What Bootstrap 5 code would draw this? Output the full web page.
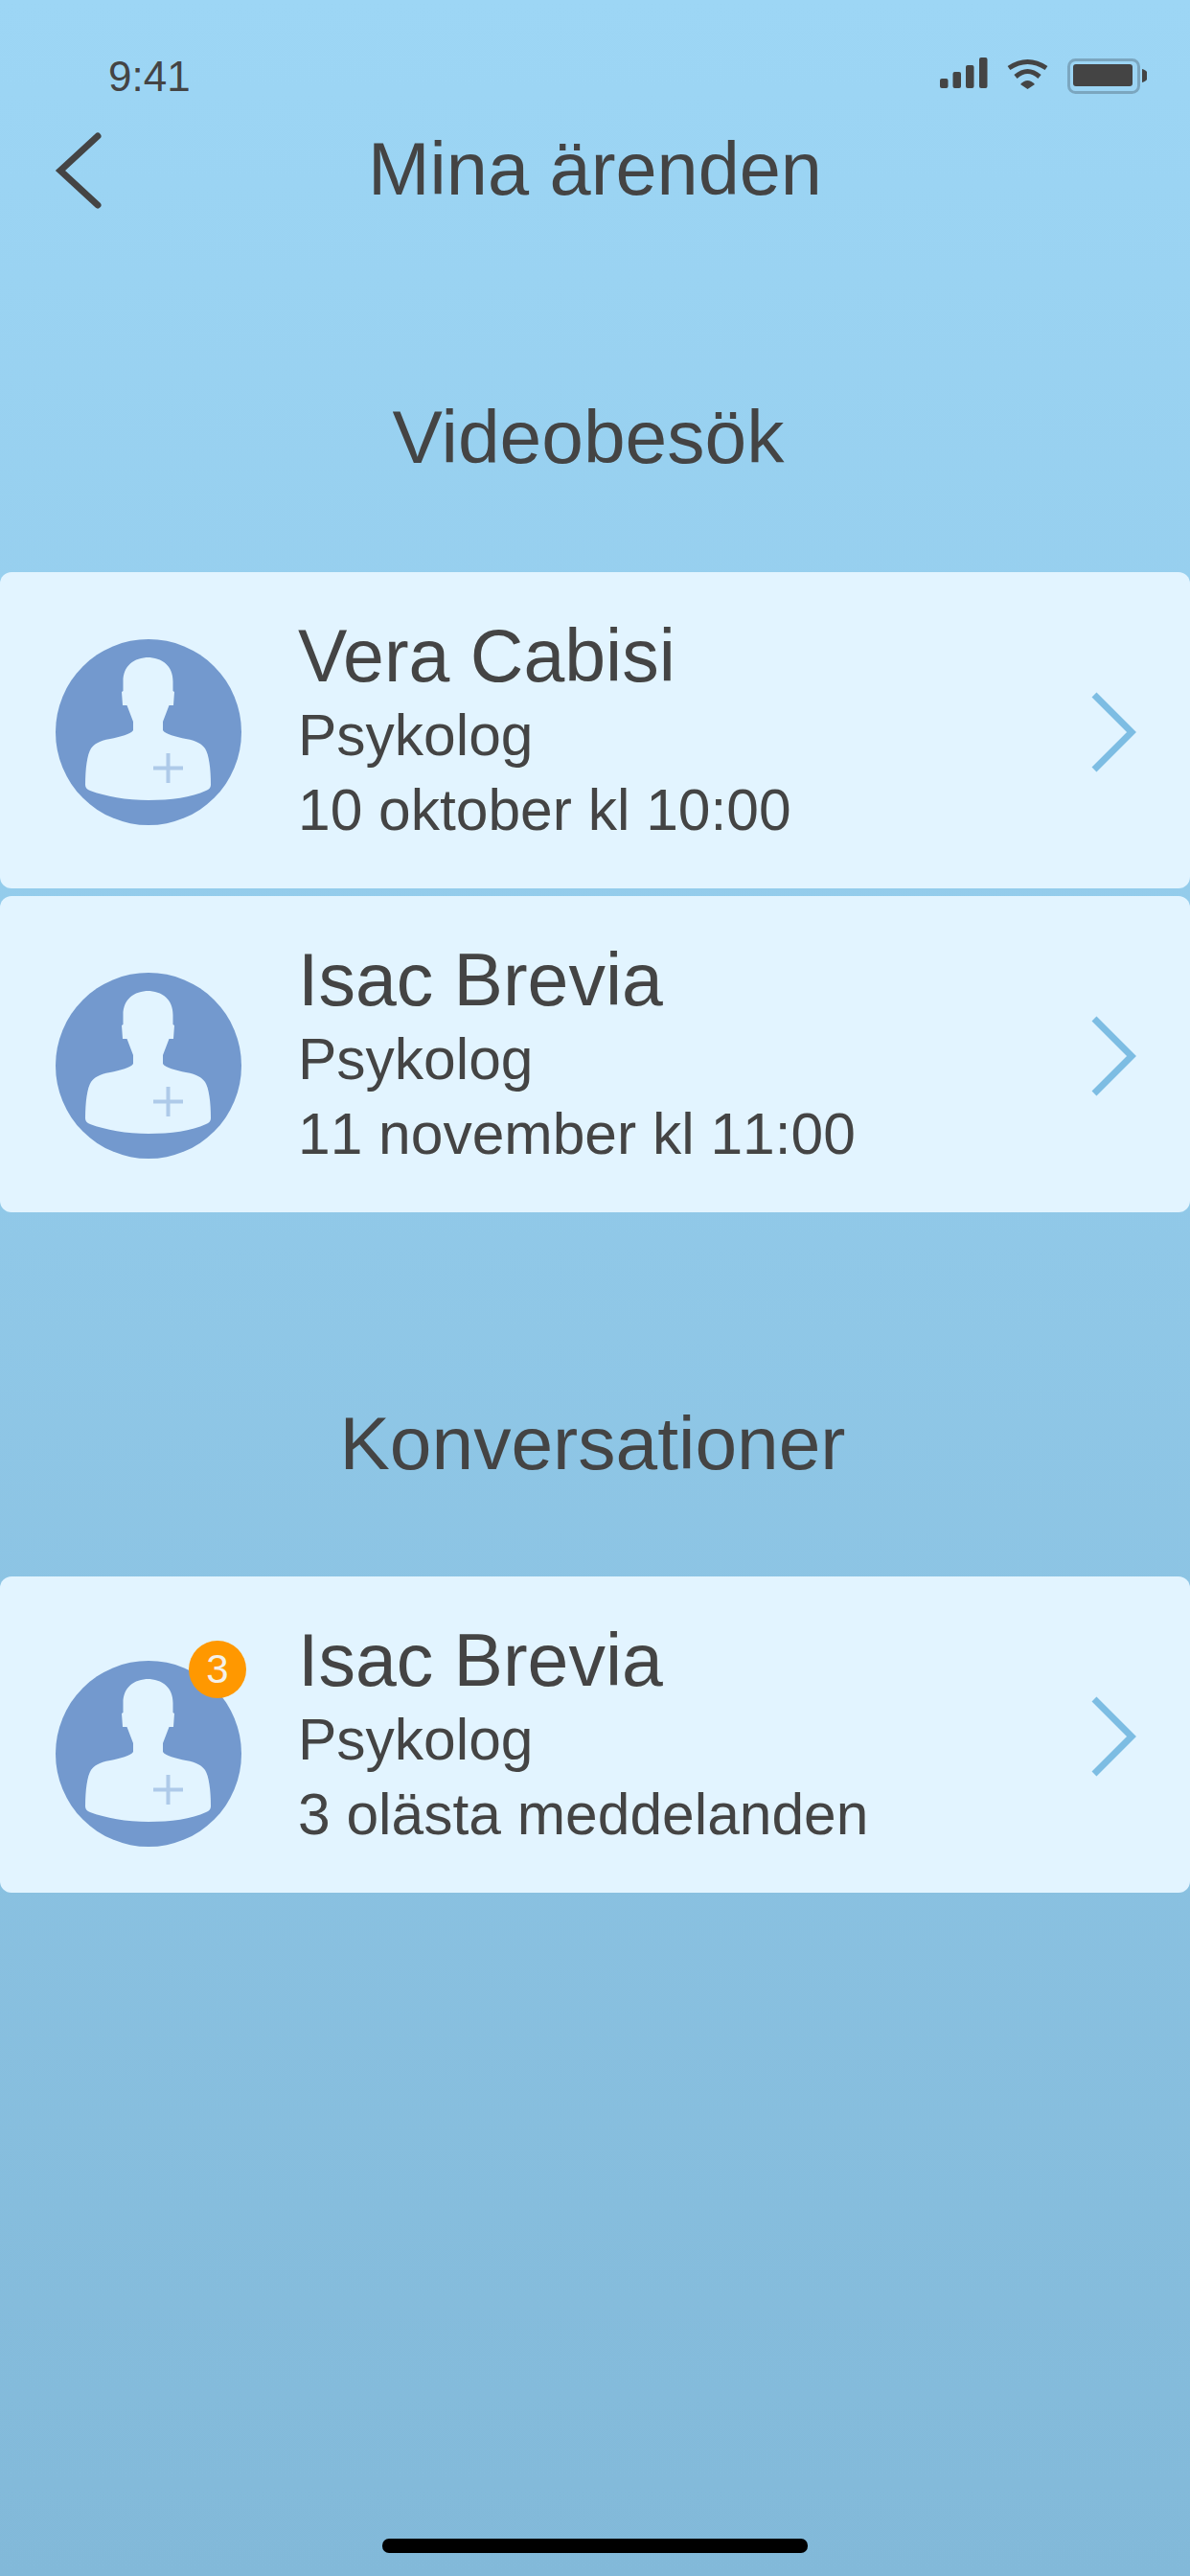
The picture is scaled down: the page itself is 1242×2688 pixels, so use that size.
<!DOCTYPE html>
<html lang="sv">
<head>
<meta charset="utf-8">
<title>Mina ärenden</title>
<link href="https://cdn.jsdelivr.net/npm/bootstrap@5.3.0/dist/css/bootstrap.min.css" rel="stylesheet">
<style>
html,body{margin:0;height:2688px;overflow:hidden}
body{font-family:"Liberation Sans",Arial,sans-serif;color:#444;background:#82b9d9}
.screen{width:1242px;height:2688px;background:linear-gradient(180deg,#9dd6f5 0%,#82b9d9 100%)}
.statusbar{height:108px;padding:56px 45px 0 113px}
.clock{font-size:44px;line-height:48px;font-kerning:none}
.sig-icons{width:216px;height:38px;margin-top:4px}
.topbar{height:139px;padding:27px 0 0 56px}
.back-svg{width:56px;height:88px;flex:none}
.page-title{font-size:77.500px;line-height:88px;font-weight:400;margin:-3px 0 0 -112px;width:1242px;text-align:center}
.sect-title{font-size:78.500px;line-height:90px;font-weight:400;margin:0;text-align:center}
.sect-one{margin-top:164px;margin-bottom:96px;padding-right:14px}
.sect-two{margin-top:196px;margin-bottom:94px;padding-right:5px}
.case-card{height:330px;border:0;border-radius:12px;background:#e2f4ff;padding:0 52px 0 58px;flex-direction:row}
.case-card + .case-card{margin-top:8px}
.avatar-wrap{position:relative;width:194px;height:194px;flex:none}
.av-a{margin-top:70px}
.av-b{margin-top:80px}
.av-c{margin-top:88px}
.avatar-svg{display:block;width:194px;height:194px}
.count-pill{position:absolute;left:139px;top:-21px;width:60px;height:60px;border-radius:50%;background:#ff9800;color:#f4f1ea;font-size:42px;line-height:60px;text-align:center}
.case-text{margin-left:59px;padding-top:44px;flex:1}
.case-name{font-size:77px;line-height:87px}
.case-line{font-size:60.500px;line-height:78px;font-kerning:none}
.chev-svg{width:52px;height:90px;flex:none;margin-top:3px}
.homebar{position:absolute;left:399px;top:2649px;width:444px;height:15px;border-radius:7px;background:#000}
</style>
</head>
<body>
<div class="screen position-relative">
  <div class="statusbar d-flex justify-content-between align-items-start">
    <div class="clock">9:41</div>
    <svg class="sig-icons" viewBox="0 0 216 38" aria-hidden="true">
      <g fill="#444">
        <rect x="0" y="22" width="8.5" height="10" rx="2"/>
        <rect x="13.500" y="15" width="8.500" height="17" rx="2"/>
        <rect x="27" y="8" width="8.500" height="24" rx="2"/>
        <rect x="41" y="0" width="8.500" height="32" rx="2"/>
        <path d="M84 28Q91.500 20 99 28L91.500 33z"/>
      </g>
      <g fill="none" stroke="#444" stroke-width="5">
        <path d="M72 11Q91.500 -2 111 11"/>
        <path d="M79 20Q91.500 9 104 20"/>
      </g>
      <rect x="134.500" y="2.500" width="73" height="34" rx="7" fill="none" stroke="#7ba6bf" stroke-width="3"/>
      <rect x="139" y="7" width="62" height="23" rx="3" fill="#444"/>
      <path d="M211 12c4 1 6 3 6 7s-2 6-6 7z" fill="#444"/>
    </svg>
  </div>
  <div class="topbar d-flex align-items-start">
    <svg class="back-svg" viewBox="0 0 56 88" aria-hidden="true">
      <path d="M46 7L7 43l39 36" fill="none" stroke="#444" stroke-width="7" stroke-linecap="round"/>
    </svg>
    <h1 class="page-title">Mina ärenden</h1>
  </div>

  <h2 class="sect-title sect-one">Videobesök</h2>
  <div>
    <div class="card case-card">
      <div class="avatar-wrap av-a">
        <svg class="avatar-svg" viewBox="0 0 194 194" aria-hidden="true">
          <circle cx="97" cy="97" r="97" fill="#7399ce"/>
          <path transform="translate(.5 0)" d="M97 19c-16 0-27 9-27 25v10l-1.500 1 1 14h4.500l6.500 17v9c-2 4-14 7-24 9-12 2-17 6-20 10-4 6-6 21-6 38 0 3 2 5 5 6 16 6 38 10 61 10s45-3 60-10c3-1 5-3 5-6 0-17-2-32-6-38-3-4-8-8-20-10-10-2-22-5-24-9v-9l6.500-17h4.500l1-14-1.500-1V44c0-16-11-25-27-25z" fill="#e2f4ff"/>
          <path d="M115.500 119h4v13.500H133v4h-13.500V150h-4v-13.500H102v-4h13.500z" fill="#aecae9"/>
        </svg>
      </div>
      <div class="case-text">
        <div class="case-name">Vera Cabisi</div>
        <div class="case-line">Psykolog</div>
        <div class="case-line">10 oktober kl 10:00</div>
      </div>
      <svg class="chev-svg align-self-center" viewBox="0 0 52 90" aria-hidden="true"><path d="M4 6l39 39L4 84" fill="none" stroke="#7dbde3" stroke-width="7"/></svg>
    </div>
    <div class="card case-card">
      <div class="avatar-wrap av-b">
        <svg class="avatar-svg" viewBox="0 0 194 194" aria-hidden="true">
          <circle cx="97" cy="97" r="97" fill="#7399ce"/>
          <path transform="translate(.5 0)" d="M97 19c-16 0-27 9-27 25v10l-1.500 1 1 14h4.500l6.500 17v9c-2 4-14 7-24 9-12 2-17 6-20 10-4 6-6 21-6 38 0 3 2 5 5 6 16 6 38 10 61 10s45-3 60-10c3-1 5-3 5-6 0-17-2-32-6-38-3-4-8-8-20-10-10-2-22-5-24-9v-9l6.500-17h4.500l1-14-1.500-1V44c0-16-11-25-27-25z" fill="#e2f4ff"/>
          <path d="M115.500 119h4v13.500H133v4h-13.500V150h-4v-13.500H102v-4h13.500z" fill="#aecae9"/>
        </svg>
      </div>
      <div class="case-text">
        <div class="case-name">Isac Brevia</div>
        <div class="case-line">Psykolog</div>
        <div class="case-line">11 november kl 11:00</div>
      </div>
      <svg class="chev-svg align-self-center" viewBox="0 0 52 90" aria-hidden="true"><path d="M4 6l39 39L4 84" fill="none" stroke="#7dbde3" stroke-width="7"/></svg>
    </div>
  </div>

  <h2 class="sect-title sect-two">Konversationer</h2>
  <div>
    <div class="card case-card">
      <div class="avatar-wrap av-c">
        <svg class="avatar-svg" viewBox="0 0 194 194" aria-hidden="true">
          <circle cx="97" cy="97" r="97" fill="#7399ce"/>
          <path transform="translate(.5 0)" d="M97 19c-16 0-27 9-27 25v10l-1.500 1 1 14h4.500l6.500 17v9c-2 4-14 7-24 9-12 2-17 6-20 10-4 6-6 21-6 38 0 3 2 5 5 6 16 6 38 10 61 10s45-3 60-10c3-1 5-3 5-6 0-17-2-32-6-38-3-4-8-8-20-10-10-2-22-5-24-9v-9l6.500-17h4.500l1-14-1.500-1V44c0-16-11-25-27-25z" fill="#e2f4ff"/>
          <path d="M115.500 119h4v13.500H133v4h-13.500V150h-4v-13.500H102v-4h13.500z" fill="#aecae9"/>
        </svg>
        <span class="count-pill">3</span>
      </div>
      <div class="case-text">
        <div class="case-name">Isac Brevia</div>
        <div class="case-line">Psykolog</div>
        <div class="case-line">3 olästa meddelanden</div>
      </div>
      <svg class="chev-svg align-self-center" viewBox="0 0 52 90" aria-hidden="true"><path d="M4 6l39 39L4 84" fill="none" stroke="#7dbde3" stroke-width="7"/></svg>
    </div>
  </div>
  <div class="homebar"></div>
</div>
</body>
</html>
